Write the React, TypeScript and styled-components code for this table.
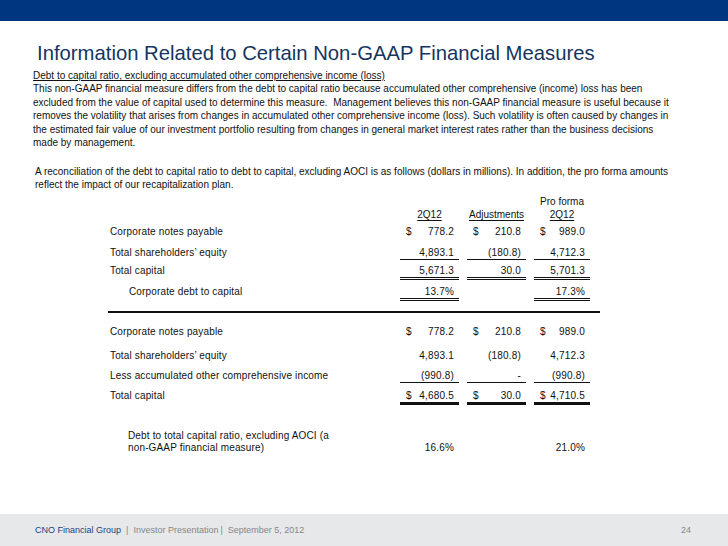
import styled, { createGlobalStyle } from "styled-components";

const GlobalStyle = createGlobalStyle`
  body {
    margin: 0;
    background: #fff;
  }
  * {
    box-sizing: border-box;
  }
`;

type Rule = "single" | "double" | "thick";

interface Amount {
  dollar?: boolean;
  value: string;
  rule?: Rule;
}

interface RowData {
  label: string;
  indent?: number;
  height: number;
  cells: (Amount | null)[];
}

const topRows: RowData[] = [
  {
    label: "Corporate notes payable",
    height: 21,
    cells: [
      { dollar: true, value: "778.2" },
      { dollar: true, value: "210.8" },
      { dollar: true, value: "989.0" },
    ],
  },
  {
    label: "Total shareholders\u2019 equity",
    height: 18.5,
    cells: [
      { value: "4,893.1", rule: "single" },
      { value: "(180.8)", rule: "single" },
      { value: "4,712.3", rule: "single" },
    ],
  },
  {
    label: "Total capital",
    height: 20.5,
    cells: [
      { value: "5,671.3", rule: "double" },
      { value: "30.0", rule: "double" },
      { value: "5,701.3", rule: "double" },
    ],
  },
  {
    label: "Corporate debt to capital",
    indent: 19,
    height: 25,
    cells: [
      { value: "13.7%", rule: "double" },
      null,
      { value: "17.3%", rule: "double" },
    ],
  },
];

const bottomRows: RowData[] = [
  {
    label: "Corporate notes payable",
    height: 24,
    cells: [
      { dollar: true, value: "778.2" },
      { dollar: true, value: "210.8" },
      { dollar: true, value: "989.0" },
    ],
  },
  {
    label: "Total shareholders\u2019 equity",
    height: 20,
    cells: [{ value: "4,893.1" }, { value: "(180.8)" }, { value: "4,712.3" }],
  },
  {
    label: "Less accumulated other comprehensive income",
    height: 20,
    cells: [
      { value: "(990.8)", rule: "single" },
      { value: "-", rule: "single" },
      { value: "(990.8)", rule: "single" },
    ],
  },
  {
    label: "Total capital",
    height: 40,
    cells: [
      { dollar: true, value: "4,680.5", rule: "thick" },
      { dollar: true, value: "30.0", rule: "thick" },
      { dollar: true, value: "4,710.5", rule: "thick" },
    ],
  },
];

const App = (): JSX.Element => {
  const renderRow = (row: RowData, i: number) => (
    <TRow key={i} $h={row.height}>
      <Label $indent={row.indent}>{row.label}</Label>
      {row.cells.map((cell, j) =>
        cell ? (
          <Cell key={j} $rule={cell.rule}>
            <span>{cell.dollar ? "$" : ""}</span>
            <span>{cell.value}</span>
          </Cell>
        ) : (
          <span key={j} />
        )
      )}
    </TRow>
  );

  return (
    <Page>
      <GlobalStyle />
      <TopBar />
      <Main>
        <Title>Information Related to Certain Non-GAAP Financial Measures</Title>
        <Text>
          <Underlined>
            Debt to capital ratio, excluding accumulated other comprehensive income (loss)
          </Underlined>
          <br />
          This non-GAAP financial measure differs from the debt to capital ratio because
          accumulated other comprehensive (income) loss has been
          <br />
          excluded from the value of capital used to determine this measure.&nbsp; Management
          believes this non-GAAP financial measure is useful because it
          <br />
          removes the volatility that arises from changes in accumulated other comprehensive
          income (loss). Such volatility is often caused by changes in
          <br />
          the estimated fair value of our investment portfolio resulting from changes in general
          market interest rates rather than the business decisions
          <br />
          made by management.
        </Text>
        <Text $indent={2} $top={15.6}>
          A reconciliation of the debt to capital ratio to debt to capital, excluding AOCI is as
          follows (dollars in millions). In addition, the pro forma amounts
          <br />
          reflect the impact of our recapitalization plan.
        </Text>

        <Table>
          <TRow $h={13.5}>
            <span />
            <span />
            <span />
            <Head>Pro forma</Head>
          </TRow>
          <TRow $h={16.5}>
            <span />
            <Head $underline>2Q12</Head>
            <Head $underline>Adjustments</Head>
            <Head $underline>2Q12</Head>
          </TRow>
          {topRows.map(renderRow)}
          <Divider />
          <Spacer />
          {bottomRows.map(renderRow)}
          <TRow $h={24}>
            <Label $indent={18}>
              Debt to total capital ratio, excluding AOCI (a
              <br />
              non-GAAP financial measure)
            </Label>
            <Cell $end>
              <span />
              <span>16.6%</span>
            </Cell>
            <span />
            <Cell $end>
              <span />
              <span>21.0%</span>
            </Cell>
          </TRow>
        </Table>
      </Main>
      <Footer>
        <FooterLeft>
          <Brand>CNO Financial Group</Brand>
          <Sep>|</Sep>
          <span>Investor Presentation</span>
          <Sep $tight>|</Sep>
          <span>September 5, 2012</span>
        </FooterLeft>
        <span>24</span>
      </Footer>
    </Page>
  );
};

export default App;

const Page = styled.div`
  width: 728px;
  height: 546px;
  display: flex;
  flex-direction: column;
  overflow: hidden;
  font-family: "Liberation Sans", Arial, sans-serif;
  color: #111;
`;

const TopBar = styled.div`
  height: 21px;
  flex-shrink: 0;
  background: #00357f;
`;

const Main = styled.main`
  flex: 1;
  padding: 20px 0 0 33px;
`;

const Title = styled.h1`
  margin: 0 0 4px 4px;
  font-size: 20.3px;
  font-weight: normal;
  line-height: 24px;
  color: #15355f;
  white-space: nowrap;
`;

const Text = styled.p<{ $indent?: number; $top?: number }>`
  margin: ${(p) => p.$top ?? 0}px 0 0 ${(p) => p.$indent ?? 0}px;
  font-size: 10px;
  line-height: 13.4px;
  white-space: nowrap;
`;

const Underlined = styled.span`
  text-decoration: underline;
  text-underline-offset: 1px;
`;

const Table = styled.div`
  margin: 4px 0 0 77px;
  display: flex;
  flex-direction: column;
  font-size: 10px;
`;

const TRow = styled.div<{ $h: number }>`
  height: ${(p) => p.$h}px;
  display: grid;
  grid-template-columns: 282px 59px 59px 56px;
  column-gap: 8px;
  align-items: start;
  line-height: 12px;
`;

const Head = styled.div<{ $underline?: boolean }>`
  text-align: center;
  white-space: nowrap;
  text-decoration: ${(p) => (p.$underline ? "underline" : "none")};
  text-underline-offset: 2px;
`;

const Label = styled.div<{ $indent?: number }>`
  padding-left: ${(p) => p.$indent ?? 0}px;
  white-space: nowrap;
  letter-spacing: 0.15px;
`;

const ruleStyle = (rule?: Rule): string => {
  if (rule === "single") return "1px solid #111";
  if (rule === "double") return "3px double #111";
  if (rule === "thick") return "3px solid #111";
  return "none";
};

const Cell = styled.div<{ $rule?: Rule; $end?: boolean }>`
  display: flex;
  justify-content: space-between;
  padding: 0 5px 0 6px;
  white-space: nowrap;
  letter-spacing: 0.2px;
  align-self: ${(p) => (p.$end ? "end" : "start")};
  border-bottom: ${(p) => ruleStyle(p.$rule)};
`;

const Divider = styled.div`
  width: 492px;
  height: 2px;
  margin-left: -2px;
  background: #111;
`;

const Spacer = styled.div`
  height: 13px;
`;

const Footer = styled.footer`
  height: 32px;
  flex-shrink: 0;
  display: flex;
  align-items: center;
  justify-content: space-between;
  padding: 0 37px 0 35px;
  background: #e7e8e9;
  font-size: 9px;
  color: #858789;
`;

const FooterLeft = styled.div`
  display: flex;
  align-items: center;
  white-space: nowrap;
`;

const Brand = styled.span`
  color: #23427c;
`;

const Sep = styled.span<{ $tight?: boolean }>`
  margin: ${(p) => (p.$tight ? "0 5px 0 2px" : "0 5px")};
`;
